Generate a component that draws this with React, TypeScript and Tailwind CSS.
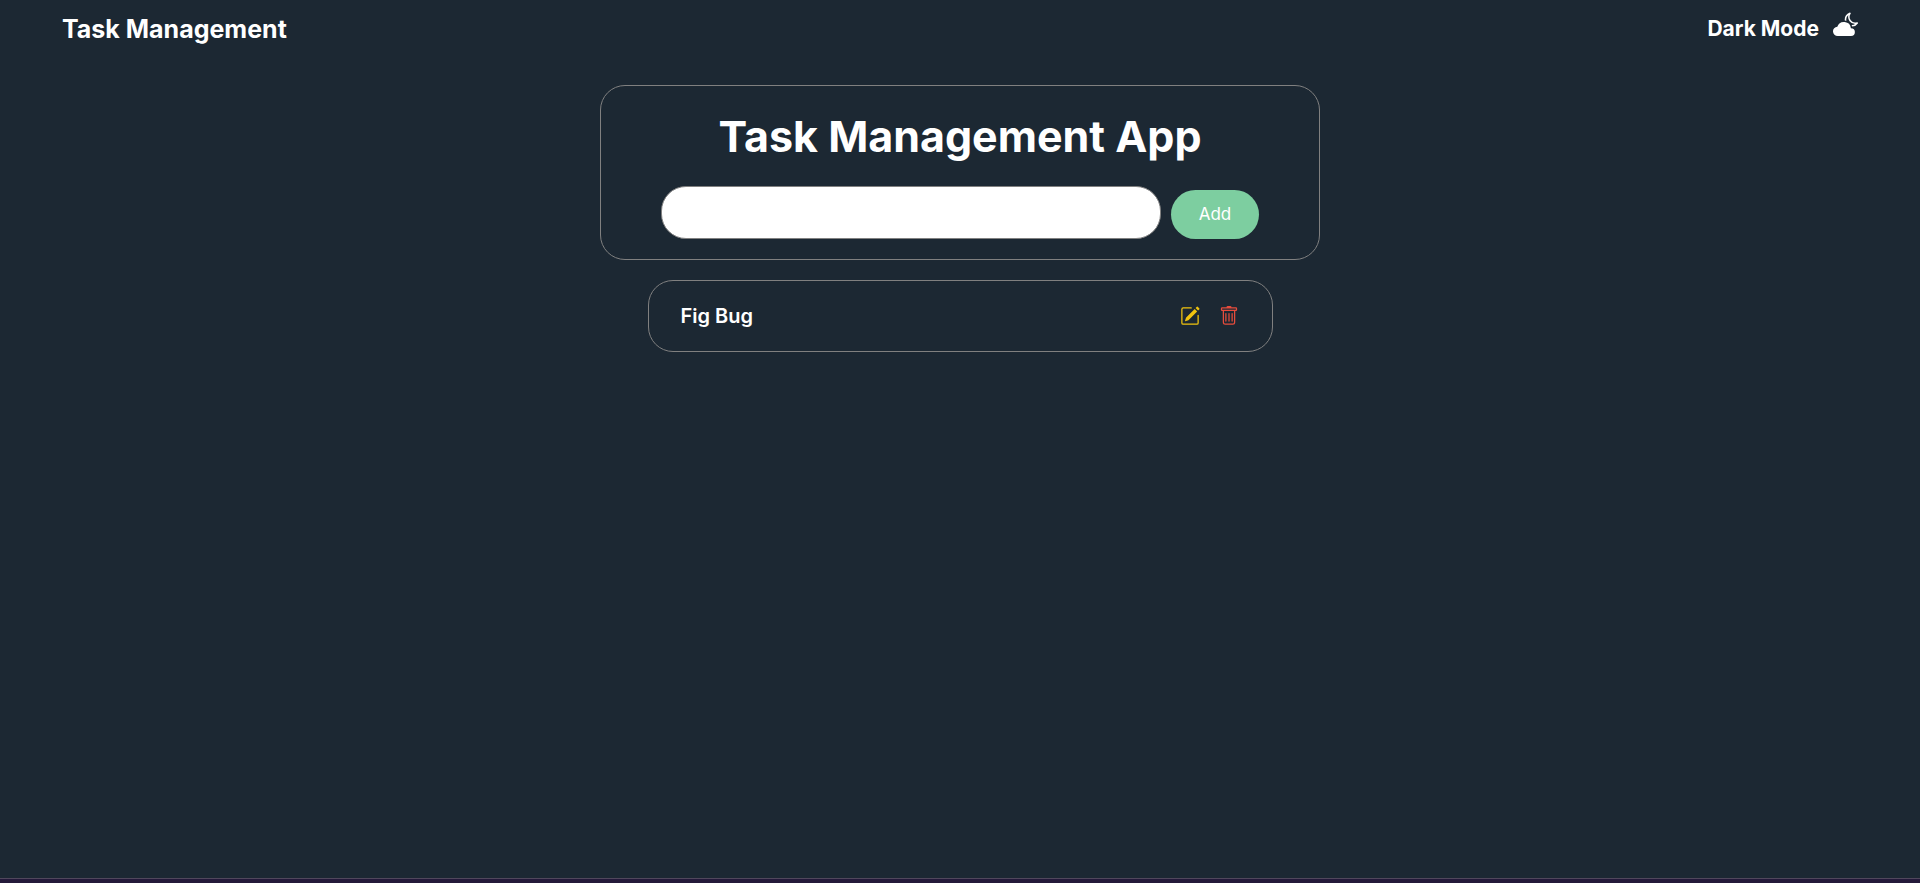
import { useState } from "react";
import { BsFillCloudMoonFill, BsPencilSquare, BsTrash } from "react-icons/bs";

const tasks = [{ id: 1, title: "Fig Bug" }];

export default function App() {
  const [text, setText] = useState("");
  return (
    <div className="flex min-h-screen flex-col bg-[#1c2833] font-['Inter',sans-serif] text-white">
      <header className="flex h-[58px] items-center justify-between px-[62px]">
        <p className="text-[25px] leading-9 font-bold">Task Management</p>
        <button type="button" className="flex items-center gap-3.5">
          <span className="text-[21px] leading-8 font-bold">Dark Mode</span>
          <BsFillCloudMoonFill size={25} className="mb-3" aria-hidden />
        </button>
      </header>

      <main className="mt-[27px] flex grow flex-col items-center gap-5">
        <section className="w-full max-w-[720px] rounded-[25px] border border-[#808080] px-[60px] pt-5 pb-5">
          <h1 className="text-center text-[43px] leading-[60px] font-bold">Task Management App</h1>
          <form className="mt-5 flex items-end gap-2.5" onSubmit={(e) => e.preventDefault()}>
            <input
              type="text"
              aria-label="Task"
              value={text}
              onChange={(e) => setText(e.target.value)}
              className="h-[53px] min-w-0 flex-1 rounded-[25px] border border-[#808080] bg-white px-5 text-base text-[#1c2833] outline-none"
            />
            <button type="submit" className="h-[49px] w-[88px] rounded-[25px] bg-[#7dcea0] text-[17px]">
              Add
            </button>
          </form>
        </section>

        <ul className="w-full max-w-[625px]">
          {tasks.map((task) => (
            <li
              key={task.id}
              className="flex h-[72px] items-center justify-between rounded-[25px] border border-[#808080] pr-[33px] pl-8"
            >
              <span className="text-xl font-semibold">{task.title}</span>
              <span className="flex gap-[19px]">
                <button type="button" aria-label="Edit" className="text-[#f1c40f]">
                  <BsPencilSquare size={20} />
                </button>
                <button type="button" aria-label="Delete" className="text-[#e74c3c]">
                  <BsTrash size={20} />
                </button>
              </span>
            </li>
          ))}
        </ul>
      </main>

      <footer className="h-[5px] border-t border-[#50475c] bg-[#24193a]" />
    </div>
  );
}
